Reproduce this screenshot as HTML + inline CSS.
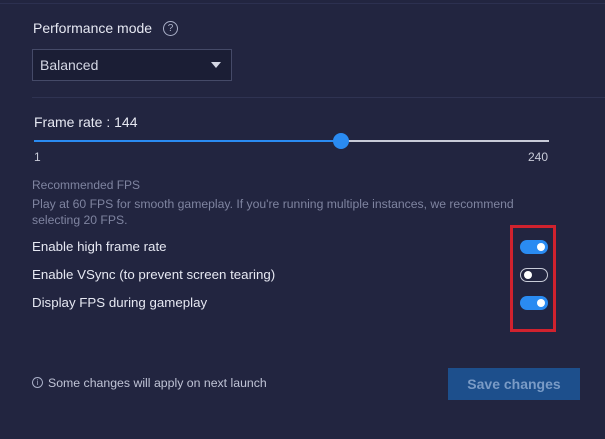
<!DOCTYPE html>
<html><head><style>
*{margin:0;padding:0;box-sizing:border-box}
body{width:605px;height:439px;background:#222540;font-family:"Liberation Sans",sans-serif;position:relative;overflow:hidden;color:#e6e8f2}
.a{position:absolute;white-space:nowrap}
.tg{position:absolute;width:28px;height:14px;border-radius:7px;background:#2a8bf2}
.tg i{position:absolute;top:3px;width:8px;height:8px;border-radius:50%;background:#fff}
</style></head><body>
<div class="a" style="left:0;top:3px;width:605px;height:1px;background:#2c3050"></div>
<div class="a" style="left:33px;top:20px;font-size:14px">Performance mode</div>
<div class="a" style="left:163px;top:21px;width:15px;height:15px;border:1px solid #aab0c8;border-radius:50%;font-size:10px;color:#aab0c8;text-align:center;line-height:13px">?</div>
<div class="a" style="left:32px;top:49px;width:200px;height:32px;border:1px solid #454a68;background:#1b1e35"></div>
<div class="a" style="left:40px;top:57px;font-size:14px;color:#d4d7e4">Balanced</div>
<div class="a" style="left:211px;top:62px;width:0;height:0;border-left:5px solid transparent;border-right:5px solid transparent;border-top:6px solid #d4d7e4"></div>
<div class="a" style="left:32px;top:97px;width:573px;height:1px;background:#2f3352"></div>
<div class="a" style="left:34px;top:114px;font-size:14px">Frame rate : 144</div>
<div class="a" style="left:34px;top:140px;width:307px;height:2px;background:#2a8bf2"></div>
<div class="a" style="left:341px;top:140px;width:208px;height:2px;background:#c8cbd8"></div>
<div class="a" style="left:333px;top:133px;width:16px;height:16px;border-radius:50%;background:#2a8bf2"></div>
<div class="a" style="left:34px;top:150px;font-size:12px;color:#c8cbd8">1</div>
<div class="a" style="left:528px;top:150px;font-size:12px;color:#c8cbd8">240</div>
<div class="a" style="left:32px;top:178px;font-size:12px;color:#7f84a0">Recommended FPS</div>
<div class="a" style="left:32px;top:196px;font-size:12.2px;color:#7f84a0;line-height:16px">Play at 60 FPS for smooth gameplay. If you're running multiple instances, we recommend<br>selecting 20 FPS.</div>
<div class="a" style="left:32px;top:239px;font-size:13.3px">Enable high frame rate</div>
<div class="a" style="left:32px;top:267px;font-size:13.3px">Enable VSync (to prevent screen tearing)</div>
<div class="a" style="left:32px;top:295px;font-size:13.3px">Display FPS during gameplay</div>
<div class="a" style="left:510px;top:225px;width:46px;height:107px;border:3px solid #d0222e"></div>
<div class="tg" style="left:520px;top:240px"><i style="right:3px"></i></div>
<div class="tg" style="left:520px;top:268px;background:none;border:1px solid #c8cbd8"><i style="left:3px;top:2px"></i></div>
<div class="tg" style="left:520px;top:296px"><i style="right:3px"></i></div>
<div class="a" style="left:32px;top:377px;width:11px;height:11px;border:1px solid #aab0c8;border-radius:50%;font-size:8px;color:#aab0c8;text-align:center;line-height:9px">i</div>
<div class="a" style="left:48px;top:376px;font-size:12.3px;color:#c0c4d6">Some changes will apply on next launch</div>
<div class="a" style="left:448px;top:368px;width:132px;height:32px;background:#1d4f8c;color:#7a9bc6;font-size:14px;font-weight:bold;text-align:center;line-height:32px">Save changes</div>
</body></html>
